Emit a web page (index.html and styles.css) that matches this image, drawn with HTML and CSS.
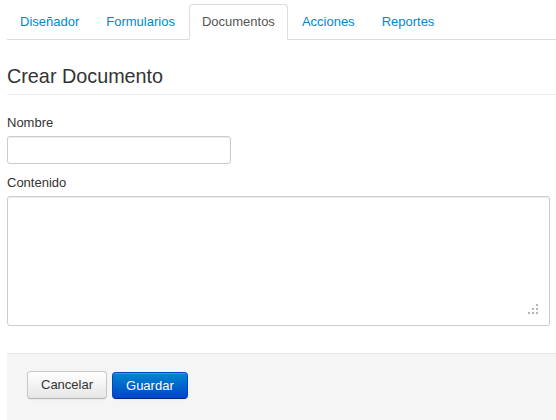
FILE: index.html
```html
<!DOCTYPE html>
<html lang="es">
<head>
<meta charset="utf-8">
<title>Crear Documento</title>
<link rel="stylesheet" href="styles.css">
</head>
<body>
<div class="page">
  <ul class="tabs">
    <li><a href="#">Diseñador</a></li>
    <li><a href="#">Formularios</a></li>
    <li class="active"><a href="#">Documentos</a></li>
    <li><a href="#">Acciones</a></li>
    <li><a href="#">Reportes</a></li>
  </ul>
  <h2 class="title">Crear Documento</h2>
  <form class="form">
    <label class="label" for="nombre">Nombre</label>
    <input class="input" id="nombre" type="text">
    <label class="label label-second" for="contenido">Contenido</label>
    <div class="area-wrap">
      <textarea class="area" id="contenido"></textarea>
      <svg class="grip" width="10" height="10" viewBox="0 0 10 10">
        <rect x="8" y="0" width="2" height="2"/>
        <rect x="4" y="4" width="2" height="2"/>
        <rect x="8" y="4" width="2" height="2"/>
        <rect x="0" y="8" width="2" height="2"/>
        <rect x="4" y="8" width="2" height="2"/>
        <rect x="8" y="8" width="2" height="2"/>
      </svg>
    </div>
    <div class="actions">
      <button type="button" class="btn">Cancelar</button>
      <button type="button" class="btn btn-primary">Guardar</button>
    </div>
  </form>
</div>
</body>
</html>
```
FILE: styles.css
```css
html, body {
  margin: 0;
  padding: 0;
  background: #fff;
}
body {
  font-family: "Liberation Sans", Arial, sans-serif;
  font-size: 13px;
  line-height: 18px;
  color: #333;
}
.page {
  padding: 4px 0 0 7px;
}
.tabs {
  list-style: none;
  margin: 0;
  padding: 0;
  display: flex;
  border-bottom: 1px solid #ddd;
}
.tabs li {
  margin-bottom: -1px;
  margin-right: 1px;
}
.tabs a {
  display: block;
  padding: 8px 12px;
  line-height: 18px;
  border: 1px solid transparent;
  border-radius: 4px 4px 0 0;
  color: #0088cc;
  text-decoration: none;
}
.tabs .active a {
  color: #555;
  background: #fff;
  border-color: #ddd #ddd transparent;
}
.title {
  margin: 24px 0 0;
  padding-bottom: 6px;
  font-size: 19.8px;
  line-height: 24px;
  font-weight: normal;
  color: #333;
  border-bottom: 1px solid #eee;
}
.form {
  display: flex;
  flex-direction: column;
  align-items: flex-start;
  margin: 0;
}
.label {
  display: block;
  margin-top: 19px;
  margin-bottom: 4px;
  color: #333;
}
.label-second {
  margin-top: 10px;
}
.input {
  box-sizing: border-box;
  width: 224px;
  height: 28px;
  margin: 0;
  padding: 4px 6px;
  border: 1px solid #ccc;
  border-radius: 3px;
  box-shadow: inset 0 1px 1px rgba(0,0,0,0.075);
  font: inherit;
  background: #fff;
}
.area-wrap {
  position: relative;
  width: 543px;
  height: 130px;
}
.area {
  box-sizing: border-box;
  display: block;
  width: 543px;
  height: 130px;
  margin: 0;
  padding: 4px 6px;
  border: 1px solid #ccc;
  border-radius: 3px;
  box-shadow: inset 0 1px 1px rgba(0,0,0,0.075);
  font: inherit;
  resize: none;
  background: #fff;
}
.grip {
  position: absolute;
  right: 12px;
  bottom: 12px;
  fill: #b5b5b5;
}
.actions {
  align-self: stretch;
  margin-top: 27px;
  height: 66px;
  padding: 17px 0 0 20px;
  background: #f5f5f5;
  border-top: 1px solid #e5e5e5;
  display: flex;
  align-items: flex-start;
  gap: 5px;
}
.btn {
  box-sizing: border-box;
  height: 28px;
  padding: 0 13px;
  font: inherit;
  color: #333;
  background: linear-gradient(#ffffff, #e6e6e6);
  border: 1px solid #c8c8c8;
  border-bottom-color: #b3b3b3;
  border-radius: 4px;
  box-shadow: inset 0 1px 0 rgba(255,255,255,0.2), 0 1px 2px rgba(0,0,0,0.05);
  cursor: pointer;
}
.btn-primary {
  height: 27px;
  margin-top: 1px;
  padding: 0 13px;
  color: #fff;
  background: linear-gradient(#0088cc, #0044cc);
  border-color: #0044cc #0044cc #002a80;
}
```
